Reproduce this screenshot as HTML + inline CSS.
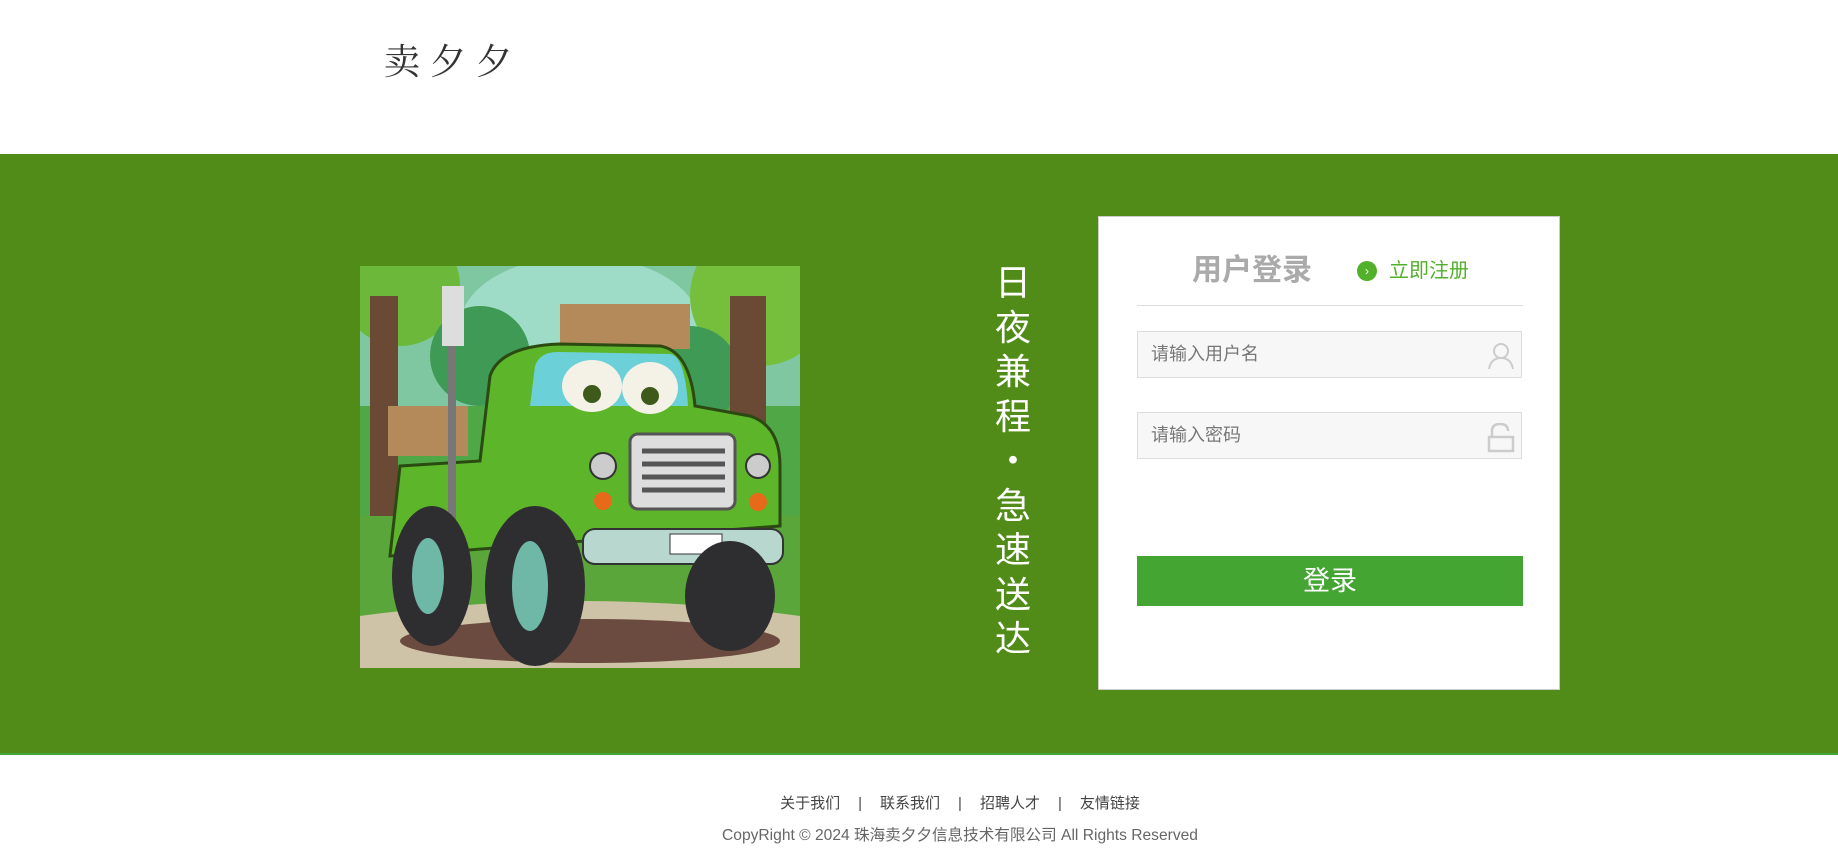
<!DOCTYPE html>
<html><head><meta charset="utf-8"><style>
*{margin:0;padding:0;box-sizing:border-box}
body{width:1838px;height:855px;background:#fff;position:relative;overflow:hidden;font-family:"Liberation Sans","Noto Sans CJK SC",sans-serif}
.logo{position:absolute;left:384px;top:38px;font-family:"Liberation Serif","Noto Serif CJK SC",serif;font-size:36px;letter-spacing:10px;color:#333;line-height:48px}
.band{position:absolute;left:0;top:154px;width:1838px;height:601px;background:#518c18;border-bottom:2px solid #43a636}
.pic{position:absolute;left:360px;top:266px;width:440px;height:402px;overflow:hidden}
.vt{position:absolute;left:993px;top:258px;width:40px;color:#fff;font-size:36px;line-height:44.5px;text-align:center;font-family:"Noto Sans CJK SC",sans-serif}
.card{position:absolute;left:1098px;top:216px;width:462px;height:474px;background:#fff;border:1px solid #ccc}
.title{position:absolute;left:93px;top:34px;font-size:30px;font-weight:bold;color:#aaa;line-height:40px}
.dot{position:absolute;left:258px;top:44px;width:20px;height:20px;border-radius:50%;background:#52b02a;color:#fff;font-size:12px;text-align:center;line-height:20px}
.reg{position:absolute;left:290px;top:40px;font-size:20px;color:#52b02a;line-height:28px}
.hr{position:absolute;left:38px;top:88px;width:386px;height:1px;background:#ddd}
.inp{position:absolute;left:38px;width:385px;height:47px;background:#f7f7f7;border:1px solid #ddd;font-size:18px;color:#777;line-height:45px;padding-left:13px}
.inp svg{position:absolute;right:6px;top:10px}
.btn{position:absolute;left:38px;top:339px;width:386px;height:50px;background:#44a533;color:#fff;font-size:27px;text-align:center;line-height:50px}
.links{position:absolute;left:0;width:1920px;top:794px;text-align:center;font-size:15px;color:#444;line-height:20px}
.links span{margin:0 18px}
.copy{position:absolute;left:0;width:1920px;top:826px;text-align:center;font-size:15.6px;color:#666;line-height:20px}
</style></head><body>
<div class="logo">卖夕夕</div>
<div class="band"></div>
<div class="pic"><svg width="440" height="402" viewBox="0 0 440 402">
<rect width="440" height="402" fill="#4fa845"/>
<rect width="440" height="140" fill="#7fc7a0"/>
<ellipse cx="220" cy="60" rx="120" ry="70" fill="#9fdcc8"/>
<circle cx="40" cy="20" r="60" fill="#6cb83a"/><circle cx="400" cy="30" r="70" fill="#76bf3c"/>
<circle cx="120" cy="90" r="50" fill="#3e9a55"/><circle cx="330" cy="110" r="50" fill="#3e9a55"/>
<rect x="10" y="30" width="28" height="280" fill="#6b4a35"/>
<rect x="370" y="30" width="36" height="270" fill="#6b4a35"/>
<rect x="0" y="250" width="440" height="152" fill="#5aa63a"/>
<path d="M0 350 Q220 320 440 350 L440 402 L0 402Z" fill="#cfc3a7"/>
<ellipse cx="230" cy="375" rx="190" ry="22" fill="#6b4a40"/>
<rect x="200" y="38" width="130" height="45" fill="#b48a5a"/>
<rect x="28" y="140" width="80" height="50" fill="#b48a5a"/>
<path d="M40 200 L120 195 L130 110 Q140 80 200 78 L300 80 Q330 85 335 140 L390 150 Q420 160 420 200 L420 260 L30 290 Z" fill="#5db52a" stroke="#2b4a12" stroke-width="3"/>
<path d="M175 100 Q180 85 200 86 L310 88 Q325 90 328 140 L170 140Z" fill="#6cd0d8"/>
<ellipse cx="232" cy="120" rx="30" ry="26" fill="#f4f2e6"/><ellipse cx="290" cy="122" rx="28" ry="26" fill="#f4f2e6"/>
<circle cx="232" cy="128" r="9" fill="#3d5a1a"/><circle cx="290" cy="130" r="9" fill="#3d5a1a"/>
<rect x="270" y="168" width="105" height="75" rx="8" fill="#ddd" stroke="#555" stroke-width="3"/>
<g stroke="#555" stroke-width="5"><line x1="282" y1="185" x2="365" y2="185"/><line x1="282" y1="198" x2="365" y2="198"/><line x1="282" y1="211" x2="365" y2="211"/><line x1="282" y1="224" x2="365" y2="224"/></g>
<circle cx="243" cy="200" r="13" fill="#ccc" stroke="#333" stroke-width="2"/><circle cx="398" cy="200" r="12" fill="#ccc" stroke="#333" stroke-width="2"/>
<circle cx="243" cy="235" r="9" fill="#e66a1a"/><circle cx="398" cy="236" r="9" fill="#e66a1a"/>
<rect x="223" y="263" width="200" height="35" rx="12" fill="#b8d8cf" stroke="#333" stroke-width="2"/>
<rect x="310" y="268" width="52" height="20" fill="#fff" stroke="#333"/>
<rect x="82" y="20" width="22" height="60" fill="#ddd"/><rect x="88" y="80" width="8" height="200" fill="#777"/>
<ellipse cx="72" cy="310" rx="40" ry="70" fill="#2e2e30"/><ellipse cx="68" cy="310" rx="16" ry="38" fill="#6fb8a8"/>
<ellipse cx="175" cy="320" rx="50" ry="80" fill="#2e2e30"/><ellipse cx="170" cy="320" rx="18" ry="45" fill="#6fb8a8"/>
<ellipse cx="370" cy="330" rx="45" ry="55" fill="#2e2e30"/>
</svg></div>
<div class="vt">日<br>夜<br>兼<br>程<br>·<br>急<br>速<br>送<br>达</div>
<div class="card">
<div class="title">用户登录</div>
<div class="dot">›</div>
<div class="reg">立即注册</div>
<div class="hr"></div>
<div class="inp" style="top:114px">请输入用户名<svg width="28" height="28" viewBox="0 0 28 28" fill="none" stroke="#ccc" stroke-width="2"><circle cx="14" cy="9" r="7"/><path d="M2 27 Q4 16 14 16 Q24 16 26 27"/></svg></div>
<div class="inp" style="top:195px">请输入密码<svg width="28" height="30" viewBox="0 0 28 30" fill="none" stroke="#ccc" stroke-width="2.5"><path d="M5 13 V8 Q5 1 13 1 Q21 1 21 8"/><rect x="2" y="14" width="24" height="14"/></svg></div>
<div class="btn">登录</div>
</div>
<div class="links">关于我们<span>|</span>联系我们<span>|</span>招聘人才<span>|</span>友情链接</div>
<div class="copy">CopyRight © 2024 珠海卖夕夕信息技术有限公司 All Rights Reserved</div>
</body></html>
